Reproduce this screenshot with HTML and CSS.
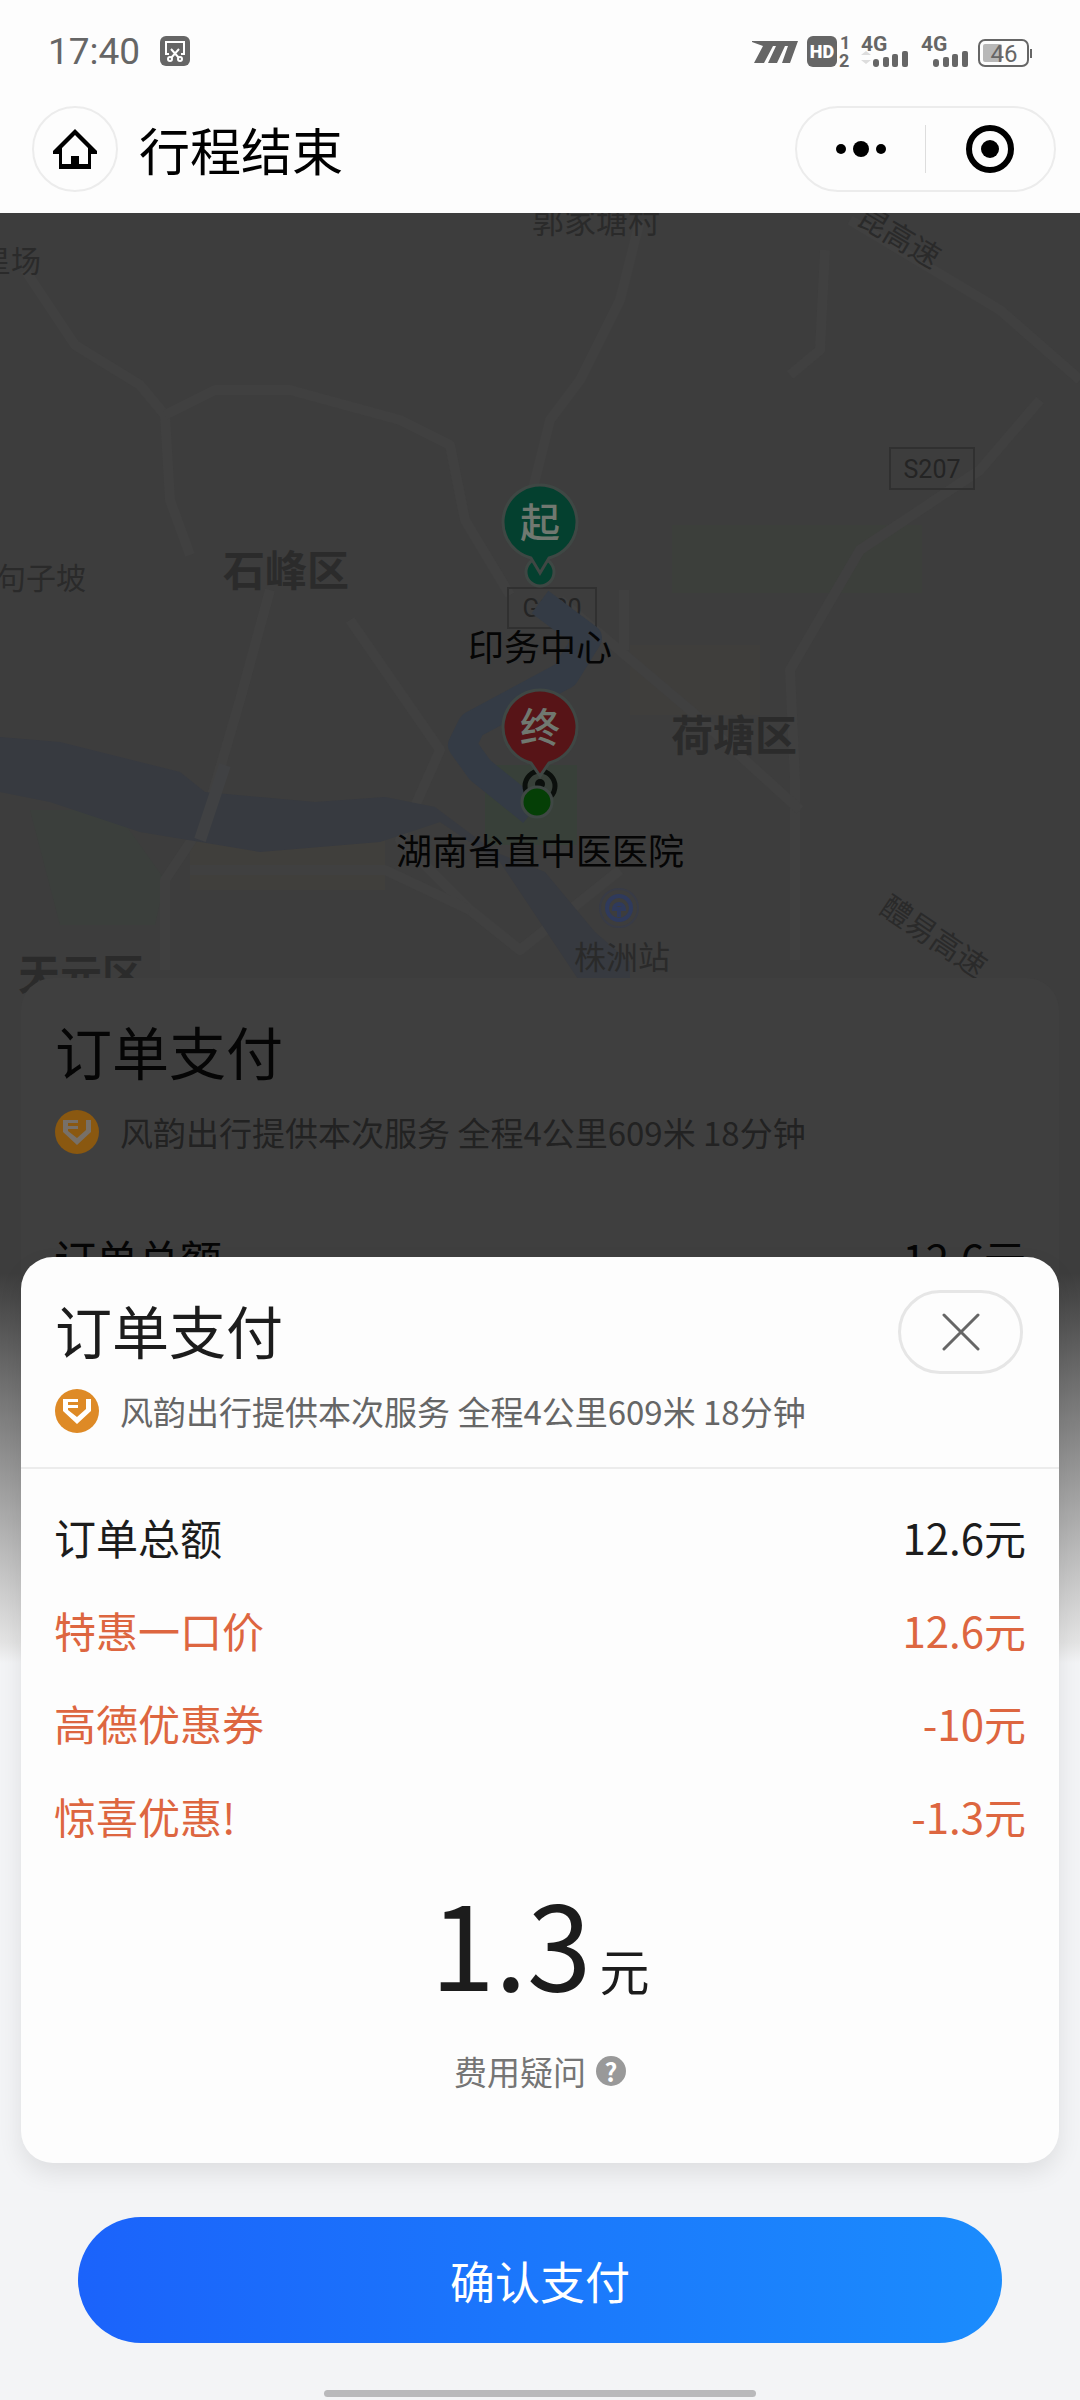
FILE: index.html
```html
<!DOCTYPE html>
<html lang="zh-CN">
<head>
    <meta charset="UTF-8">
    <meta name="viewport" content="width=device-width, initial-scale=1.0">
    <title>行程结束</title>
    <link rel="stylesheet" href="styles.css">
</head>
<body>
    <header>
        <div class="status-bar">
            <span class="time">17:40</span>
            <svg class="clip-icon" width="30" height="30" viewBox="0 0 30 30">
                <rect width="30" height="30" rx="6" fill="#666"/>
                <g fill="none" stroke="#fff" stroke-width="2">
                    <path d="M9 18H6V6h18v12h-3"/>
                    <path d="M11 13l8 9M19 13l-8 9"/>
                    <circle cx="10" cy="23" r="2"/>
                    <circle cx="20" cy="23" r="2"/>
                </g>
            </svg>
            <svg class="signals" width="282" height="54" viewBox="0 -10 282 54" fill="#666">
                <path d="M0 7h46l-8 22h-8l6-17h-3l-8 17h-9l8-17h-3l-9 17H2l9-17L0 8z"/>
                <rect x="55" y="2" width="30" height="31" rx="6"/>
                <text x="70" y="24" class="hd" text-anchor="middle">HD</text>
                <text x="88" y="15" class="sim">1</text>
                <text x="87" y="33" class="sim">2</text>
                <text x="109" y="17" class="net">4G</text>
                <path d="M109 21l5-4 5 4zM109 26h10l-5 4z" fill="#ddd"/>
                <rect x="121" y="25" width="6" height="8" rx="3"/>
                <rect x="131" y="23" width="6" height="10" rx="2"/>
                <rect x="140" y="20" width="6" height="13" rx="2"/>
                <rect x="150" y="17" width="6" height="16" rx="2"/>
                <text x="169" y="17" class="net">4G</text>
                <rect x="181" y="25" width="6" height="8" rx="3"/>
                <rect x="191" y="23" width="6" height="10" rx="2"/>
                <rect x="200" y="20" width="6" height="13" rx="2"/>
                <rect x="210" y="17" width="6" height="16" rx="2"/>
                <rect x="227" y="6" width="49" height="26" rx="6" fill="none" stroke="#666" stroke-width="2"/>
                <rect x="231" y="10" width="19" height="18" rx="2" fill="#b8b8b8"/>
                <rect x="278" y="15" width="2" height="9"/>
                <text x="252" y="28" class="battery" text-anchor="middle">46</text>
            </svg>
        </div>
        <div class="nav-bar">
            <button class="home" aria-label="首页">
                <svg width="44" height="42" viewBox="0 0 44 42">
                    <path d="M22 1L0 23v3h6v15h32V26h6v-3zM22 7l13 13v16H9V20z" fill="#000" fill-rule="evenodd"/>
                    <path d="M18 28h8v10h-8z"/>
                </svg>
            </button>
            <h1>行程结束</h1>
            <div class="capsule">
                <button aria-label="更多">
                    <svg width="50" height="18" viewBox="0 0 50 18">
                        <circle cx="5" cy="9" r="5"/>
                        <circle cx="25" cy="9" r="8"/>
                        <circle cx="45" cy="9" r="5"/>
                    </svg>
                </button>
                <button aria-label="关闭小程序">
                    <svg width="48" height="48" viewBox="0 0 48 48">
                        <circle cx="24" cy="24" r="21" fill="none" stroke="#000" stroke-width="6"/>
                        <circle cx="24" cy="24" r="9"/>
                    </svg>
                </button>
            </div>
        </div>
    </header>

    <main class="stage">
        <svg class="map" viewBox="0 -7 1080 797" preserveAspectRatio="xMidYMin slice">
            <!-- parks -->
            <path d="M672 305h250v68H672z" fill="#3c3f3b"/>
            <path d="M30 590h85l50 70-10 45H60z" fill="#3b3f3c"/>
            <path d="M190 610h195v60H190z" fill="#403f3c"/>
            <path d="M630 425h130v70H630z" fill="#3f3e3c"/>
            <path d="M485 545h92v80h-92z" fill="#384039"/>
            <!-- roads -->
            <g class="road">
                <path d="M25 50L75 125 140 165 165 195 170 280 190 335"/>
                <path d="M165 195L215 170H290L400 200 450 225 465 300 510 375"/>
                <path d="M640 0L620 80 580 160 550 200 530 280"/>
                <path d="M825 30L820 130 790 155M850 0L1000 90 1080 160"/>
                <path d="M1040 180L980 250 860 330 790 450 795 560V740"/>
                <path d="M560 380L690 490 800 590"/>
                <path d="M270 370L240 480 205 600 165 660V750"/>
                <path d="M350 400L440 530 400 620 470 690 520 730 620 650"/>
                <path d="M190 650H385L470 690"/>
                <path d="M624 370V430"/>
            </g>
            <!-- river -->
            <path class="river" d="M0 517l60 5 120 30 25 20 110 10 70-5 50 10 60 45 50 20 50 60 35 30v20h-50l-80-120-60-40-60 20-120 10-120-20-90-30-50-10z"/>
            <path d="M200 620L225 545" class="bridge"/>

            <g class="places">
                <text x="-19" y="52">星场</text>
                <text x="532" y="13" class="large">郭家塘村</text>
                <text x="-4" y="369">句子坡</text>
                <text x="574" y="749" class="large">株洲站</text>
                <text x="855" y="3" transform="rotate(31 855 3)">昆高速</text>
                <text x="878" y="692" transform="rotate(34 878 692)">醴易高速</text>
            </g>
            <g class="districts">
                <text x="223" y="366">石峰区</text>
                <text x="671" y="531">荷塘区</text>
                <text x="18" y="770">天元区</text>
            </g>
            <g class="road-no">
                <rect x="890" y="228" width="84" height="41"/>
                <text x="932" y="258">S207</text>
                <rect x="508" y="368" width="88" height="40"/>
                <text x="552" y="397">G320</text>
            </g>
            <path class="route" d="M540 382L588 418 565 455 472 505 462 525 480 550 532 592"/>
            <g class="station">
                <circle cx="619" cy="688" r="12"/>
                <path d="M619 690v7M614 689a5 5 0 0 1 10 0z"/>
                <circle cx="619" cy="688" r="19" class="halo"/>
            </g>

            <!-- start pin -->
            <circle cx="540" cy="352" r="14" class="pin start"/>
            <path class="pin start" d="M540 353l-9-15a37 37 0 1 1 18 0z"/>
            <text x="540" y="317" class="pin-text">起</text>
            <!-- end pin -->
            <circle cx="540" cy="566" r="15" fill="none" stroke="#0b0f0c" stroke-width="5"/>
            <circle cx="540" cy="564" r="5" fill="#0b0f0c"/>
            <circle cx="537" cy="582" r="15" class="pin here"/>
            <path class="pin end" d="M540 556l-9-13a37 37 0 1 1 18 0z"/>
            <text x="540" y="522" class="pin-text">终</text>
            <text x="540" y="441" class="stop-name">印务中心</text>
            <text x="540" y="645" class="stop-name">湖南省直中医医院</text>
        </svg>

        <section class="card behind" aria-hidden="true">
            <div class="card-head">
                <div class="title-row"><h2>订单支付</h2></div>
                <p class="service">
                    <svg width="44" height="44" viewBox="0 0 44 44">
                        <circle cx="22" cy="22" r="22" fill="#8a5810"/>
                        <path d="M8 10h15v3H13v3h10v3H13v2l9 7 9-8V10h5v12L22 35 8 22z" fill="#777068"/>
                    </svg>
                    风韵出行提供本次服务 全程4公里609米 18分钟
                </p>
            </div>
            <dl>
                <div><dt>订单总额</dt><dd>12.6元</dd></div>
            </dl>
        </section>

        <section class="card sheet">
            <div class="card-head">
                <div class="title-row">
                    <h2>订单支付</h2>
                    <button class="close" aria-label="关闭">
                        <svg width="38" height="38" viewBox="0 0 38 38">
                            <path d="M2 2l34 34M36 2L2 36" stroke="#666" stroke-width="3" stroke-linecap="round"/>
                        </svg>
                    </button>
                </div>
                <p class="service">
                    <svg width="44" height="44" viewBox="0 0 44 44">
                        <circle cx="22" cy="22" r="22" fill="#de8a26"/>
                        <path d="M8 10h15v3H13v3h10v3H13v2l9 7 9-8V10h5v12L22 35 8 22z" fill="#fff"/>
                    </svg>
                    风韵出行提供本次服务 全程4公里609米 18分钟
                </p>
            </div>
            <dl>
                <div><dt>订单总额</dt><dd>12.6元</dd></div>
                <div class="discount"><dt>特惠一口价</dt><dd>12.6元</dd></div>
                <div class="discount"><dt>高德优惠券</dt><dd>-10元</dd></div>
                <div class="discount"><dt>惊喜优惠!</dt><dd>-1.3元</dd></div>
            </dl>
            <p class="total">1.3<span>元</span></p>
            <a class="help" href="#">费用疑问 <i>?</i></a>
        </section>
    </main>

    <footer>
        <button class="pay">确认支付</button>
        <div class="home-bar"></div>
    </footer>
</body>
</html>
```
FILE: styles.css
```css
* {
    box-sizing: border-box;
}
body {
    margin: 0;
    min-height: 100vh;
    display: flex;
    flex-direction: column;
    background-color: #f3f4f6;
    color: #1c1c1c;
    font-family: "Noto Sans CJK SC", sans-serif;
}
h1, h2, p, dl, dd {
    margin: 0;
    font-weight: 400;
}
button {
    padding: 0;
    border: none;
    background: none;
    font-family: inherit;
    cursor: pointer;
}
svg {
    display: block;
    flex: none;
}

/* header */
header {
    height: 213px;
    background-color: #fdfdfd;
}
.status-bar {
    display: flex;
    align-items: center;
    height: 102px;
    padding: 0 46px 0 48px;
}
.time {
    font-family: Roboto, sans-serif;
    font-size: 37px;
    color: #666;
}
.clip-icon {
    margin-left: 20px;
}
.signals {
    margin-left: auto;
    font-family: Roboto, sans-serif;
    font-weight: 700;
}
.hd {
    font-size: 18px;
    font-weight: 900;
    fill: #fff;
}
.sim {
    font-size: 18px;
}
.net {
    font-size: 21px;
}
.battery {
    font-size: 24px;
    font-weight: 400;
}
.nav-bar {
    display: flex;
    align-items: center;
    height: 94px;
    padding: 0 24px 0 32px;
}
.home {
    display: flex;
    align-items: center;
    justify-content: center;
    width: 86px;
    height: 86px;
    border: 2px solid #ececec;
    border-radius: 50%;
}
h1 {
    margin-left: 21px;
    font-size: 51px;
    line-height: 80px;
    color: #000;
}
.capsule {
    display: flex;
    align-items: center;
    width: 261px;
    height: 86px;
    margin-left: auto;
    border: 2px solid #ececec;
    border-radius: 43px;
}
.capsule button {
    display: flex;
    flex: 1;
    align-items: center;
    justify-content: center;
    height: 48px;
}
.capsule button + button {
    border-left: 1px solid #ddd;
}

/* map, order card and payment sheet share one grid cell */
.stage {
    display: grid;
    grid-template-columns: minmax(0, 1fr);
    background: linear-gradient(#3d3d3d 1060px, #6b6b6b 1160px, #9c9c9c 1270px, #e4e4e4 1430px, #f3f4f6 1450px);
}
.stage > * {
    grid-area: 1 / 1;
    align-self: start;
}
.map {
    width: 100%;
    height: 797px;
    background-color: #3d3d3d;
}
.road {
    fill: none;
    stroke: #404040;
    stroke-width: 10;
    stroke-linejoin: round;
}
.river {
    fill: #373a40;
}
.bridge {
    stroke: #404143;
    stroke-width: 12;
}
.route {
    fill: none;
    stroke: #343b45;
    stroke-width: 28;
    stroke-linejoin: round;
}
.places {
    font-size: 30px;
    fill: #2a2a2a;
}
.places .large {
    font-size: 32px;
}
.districts {
    font-size: 42px;
    font-weight: 700;
    fill: #2b2b2b;
}
.road-no {
    font-family: Roboto, sans-serif;
    font-size: 25px;
    text-anchor: middle;
    fill: #242424;
}
.road-no rect {
    fill: none;
    stroke: #303030;
    stroke-width: 2;
}
.station {
    fill: none;
    stroke: #2f3a5c;
    stroke-width: 4;
}
.station .halo {
    stroke: #383b46;
    stroke-width: 2;
}
.pin {
    stroke: #3f4744;
    stroke-width: 3;
}
.start {
    fill: #04402f;
}
.end {
    fill: #571417;
}
.here {
    fill: #053f06;
}
.pin-text {
    font-size: 40px;
    font-weight: 500;
    text-anchor: middle;
    fill: #707870;
}
.stop-name {
    font-size: 36px;
    text-anchor: middle;
    fill: #050505;
}

/* cards */
.card {
    margin: 0 21px;
    border-radius: 32px;
    background-color: #fdfdfd;
}
.card-head {
    height: 212px;
    padding: 33px 36px 0 34px;
    border-bottom: 2px solid #ececec;
}
.title-row {
    display: flex;
    align-items: center;
    justify-content: space-between;
    height: 84px;
}
h2 {
    font-size: 57px;
    line-height: 84px;
    padding-bottom: 6px;
}
.close {
    display: flex;
    align-items: center;
    justify-content: center;
    width: 125px;
    height: 84px;
    border: 3px solid #e6e6e6;
    border-radius: 42px;
}
.service {
    display: flex;
    align-items: center;
    gap: 21px;
    margin-top: 15px;
    font-size: 33px;
    line-height: 44px;
    color: #666;
}
dl {
    padding: 21px 33px 0;
}
dl div {
    display: flex;
    justify-content: space-between;
    font-size: 42px;
    line-height: 93px;
}
.discount {
    color: #dd6640;
}
.total {
    margin-top: 8px;
    text-align: center;
    font-size: 116px;
    line-height: 140px;
}
.total span {
    margin-left: 8px;
    font-size: 50px;
    line-height: 1;
}
.help {
    display: flex;
    align-items: center;
    justify-content: center;
    gap: 10px;
    margin-top: 39px;
    font-size: 33px;
    line-height: 44px;
    color: #757575;
    text-decoration: none;
}
.help i {
    width: 30px;
    height: 30px;
    border-radius: 50%;
    background-color: #999;
    color: #fff;
    font-size: 25px;
    font-style: normal;
    font-weight: 700;
    line-height: 30px;
    text-align: center;
}
.behind {
    margin-top: 765px;
    background-color: #3f3f3f;
    color: #050505;
}
.behind .card-head {
    border-color: #3f3f3f;
}
.behind .service {
    color: #222;
}
.sheet {
    margin-top: 1044px;
    padding-bottom: 70px;
    box-shadow: 0 10px 24px rgba(0, 0, 0, 0.09);
}

/* bottom */
footer {
    padding: 54px 78px 3px;
}
.pay {
    display: block;
    width: 100%;
    height: 126px;
    border-radius: 63px;
    background: linear-gradient(90deg, #1b63fb, #1b8cfd);
    color: #fff;
    font-size: 45px;
}
.home-bar {
    width: 432px;
    max-width: 100%;
    height: 7px;
    margin: 47px auto 0;
    border-radius: 4px;
    background-color: #b9b9bb;
}
```
